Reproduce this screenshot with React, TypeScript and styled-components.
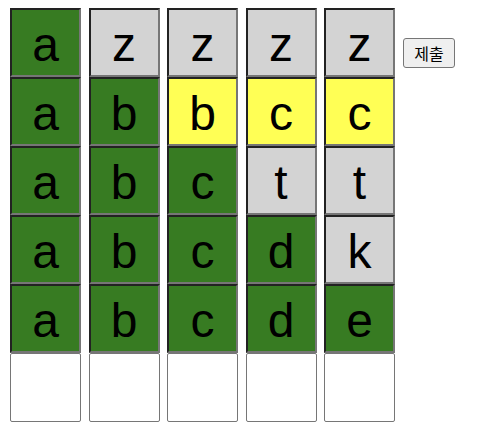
import styled, { createGlobalStyle } from "styled-components";

const GlobalStyle = createGlobalStyle`
    body {
        margin: 0;
        background: #ffffff;
        font-family: "Liberation Sans", Arial, sans-serif;
    }
`;

const Page = styled.div`
    display: flex;
    align-items: flex-start;
    padding: 8px 0 0 10px;
    gap: 7.5px;
`;

const Column = styled.div`
    display: flex;
    flex-direction: column;
    width: 71px;
`;

type CellState = "hit" | "near" | "miss" | "empty";

const colors: Record<CellState, string> = {
    hit: "#377b22",
    near: "#ffff55",
    miss: "#d3d3d3",
    empty: "#ffffff",
};

const Cell = styled.div<{ $state: CellState }>`
    box-sizing: border-box;
    height: 69px;
    padding-top: 3px;
    display: flex;
    align-items: center;
    justify-content: center;
    font-size: 48px;
    color: #000;
    background: ${(p) => colors[p.$state]};
    border-style: solid;
    border-width: ${(p) => (p.$state === "empty" ? "1px" : "2px")};
    border-color: ${(p) =>
        p.$state === "empty" ? "#767676" : "#222222 #767676 #767676 #222222"};
    border-radius: ${(p) => (p.$state === "empty" ? "2px" : "0")};
`;

const SubmitButton = styled.button`
    box-sizing: border-box;
    margin: 30px 0 0 0.5px;
    width: 52px;
    height: 30px;
    padding: 0;
    font-size: 16px;
    font-family: "Noto Sans CJK KR", sans-serif;
    color: #000;
    background: #efefef;
    border: 1px solid #767676;
    border-radius: 3px;
`;

const columns: [string, CellState][][] = [
    [["a", "hit"], ["a", "hit"], ["a", "hit"], ["a", "hit"], ["a", "hit"], ["", "empty"]],
    [["z", "miss"], ["b", "hit"], ["b", "hit"], ["b", "hit"], ["b", "hit"], ["", "empty"]],
    [["z", "miss"], ["b", "near"], ["c", "hit"], ["c", "hit"], ["c", "hit"], ["", "empty"]],
    [["z", "miss"], ["c", "near"], ["t", "miss"], ["d", "hit"], ["d", "hit"], ["", "empty"]],
    [["z", "miss"], ["c", "near"], ["t", "miss"], ["k", "miss"], ["e", "hit"], ["", "empty"]],
];

const App = () => {
    return (
        <>
            <GlobalStyle />
            <Page>
                {columns.map((col, i) => (
                    <Column key={i}>
                        {col.map(([letter, state], j) => (
                            <Cell key={j} $state={state}>
                                {letter}
                            </Cell>
                        ))}
                    </Column>
                ))}
                <SubmitButton>제출</SubmitButton>
            </Page>
        </>
    );
};

export default App;
